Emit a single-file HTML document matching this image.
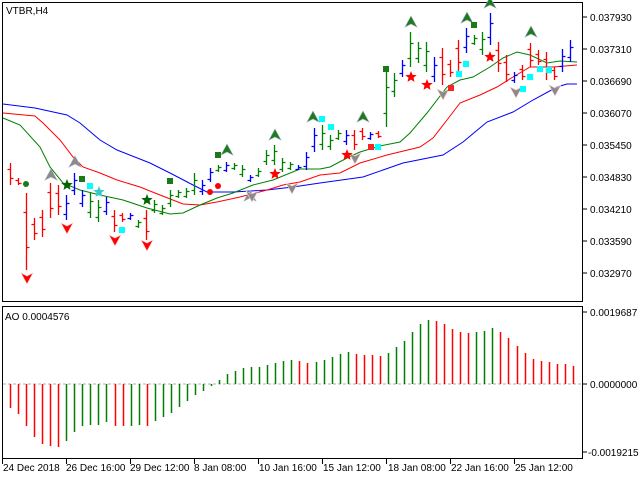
<!DOCTYPE html>
<html><head><meta charset="utf-8">
<style>
html,body{margin:0;padding:0;background:#fff;}
svg{display:block;font-family:"Liberation Sans",sans-serif;font-size:10px;}
</style></head>
<body>
<svg id="s" width="640" height="480" viewBox="0 0 640 480" xmlns="http://www.w3.org/2000/svg">
<rect width="640" height="480" fill="#fff"/>
<!-- frames -->
<rect x="2.5" y="2.5" width="580" height="299" fill="none" stroke="#000"/>
<rect x="2.5" y="306.5" width="580" height="152" fill="none" stroke="#000"/>
<g stroke="#000">
<line x1="583" y1="17" x2="587" y2="17"/><line x1="583" y1="49" x2="587" y2="49"/><line x1="583" y1="81" x2="587" y2="81"/><line x1="583" y1="113" x2="587" y2="113"/><line x1="583" y1="145" x2="587" y2="145"/><line x1="583" y1="177" x2="587" y2="177"/><line x1="583" y1="209" x2="587" y2="209"/><line x1="583" y1="241" x2="587" y2="241"/><line x1="583" y1="273" x2="587" y2="273"/>
<line x1="583" y1="312" x2="587" y2="312"/><line x1="583" y1="384" x2="587" y2="384"/><line x1="583" y1="452" x2="587" y2="452"/>
<line x1="2.5" y1="459" x2="2.5" y2="464"/><line x1="66.5" y1="459" x2="66.5" y2="464"/><line x1="130.5" y1="459" x2="130.5" y2="464"/><line x1="194.5" y1="459" x2="194.5" y2="464"/><line x1="258.5" y1="459" x2="258.5" y2="464"/><line x1="322.5" y1="459" x2="322.5" y2="464"/><line x1="386.5" y1="459" x2="386.5" y2="464"/><line x1="450.5" y1="459" x2="450.5" y2="464"/><line x1="514.5" y1="459" x2="514.5" y2="464"/>
</g>
<g fill="#000">
<text x="590" y="21">0.037930</text><text x="590" y="53">0.037310</text><text x="590" y="85">0.036690</text><text x="590" y="117">0.036070</text><text x="590" y="149">0.035450</text><text x="590" y="181">0.034830</text><text x="590" y="213">0.034210</text><text x="590" y="245">0.033590</text><text x="590" y="277">0.032970</text>
<text x="590" y="316">0.0019687</text><text x="590" y="388">0.0000000</text><text x="588" y="456">-0.0019215</text>
<text x="3" y="471">24 Dec 2018</text><text x="66" y="471">26 Dec 16:00</text><text x="130" y="471">29 Dec 12:00</text><text x="194" y="471">8 Jan 08:00</text><text x="259" y="471">10 Jan 16:00</text><text x="323" y="471">15 Jan 12:00</text><text x="388" y="471">18 Jan 08:00</text><text x="451" y="471">22 Jan 16:00</text><text x="515" y="471">25 Jan 12:00</text>
<text x="6" y="14">VTBR,H4</text>
<text x="5" y="320">AO 0.0004576</text>
</g>
<line x1="3" y1="384" x2="582" y2="384" stroke="#b0b0b0" stroke-dasharray="3,2"/>
<!-- MAs -->
<polyline fill="none" stroke="#0000ff" points="3,104 35,108 67,115 80,123 100,140 117,150 150,163 170,173 193,185 207,192 233,192 267,190 293,187 320,183 363,177 403,163 443,155 463,142 487,122 513,112 533,100 557,87 567,84 577,84"/>
<polyline fill="none" stroke="#ff0000" points="3,113 35,116 43,123 60,140 73,157 83,167 100,173 117,180 140,187 160,195 183,204 200,205 217,202 240,197 267,190 283,185 300,182 320,175 340,173 360,163 387,155 420,147 433,138 447,120 460,103 480,95 497,87 513,77 530,67 553,67 577,65"/>
<polyline fill="none" stroke="#008000" points="3,118 20,125 40,147 50,167 63,183 80,190 100,195 123,200 147,208 170,214 183,213 200,205 217,198 233,193 253,185 273,180 300,169 320,169 330,167 347,158 360,152 380,146 400,142 410,133 427,113 447,87 460,80 473,77 490,67 503,58 517,52 530,55 547,63 560,61 577,62"/>
<g id="bars"></g>
<g id="ao"></g>
<g id="mk"></g>
</svg>
<script>
var NS="http://www.w3.org/2000/svg";
function add(g,tag,a){var e=document.createElementNS(NS,tag);for(var k in a)e.setAttribute(k,a[k]);document.getElementById(g).appendChild(e);}
var red=[[10,163,185],[18,178,185],[26,193,270],[34,218,240],[42,210,237],[50,183,218],[58,185,215],[114,210,232],[122,213,222],[146,210,240],[354,130,150],[362,128,140],[378,131,138],[442,48,85],[450,60,77],[458,40,72],[498,42,72],[506,55,82],[522,65,80],[530,43,67],[538,50,65],[546,52,80],[554,67,80]];
var blue=[[66,195,220],[74,173,195],[82,190,207],[106,197,215],[130,213,220],[202,180,195],[210,168,182],[226,162,172],[250,175,182],[298,165,170],[306,152,170],[314,128,152],[346,130,145],[370,132,140],[402,60,77],[434,57,82],[466,28,53],[490,13,45],[514,72,83],[562,49,72],[570,40,62]];
var green=[[90,193,218],[98,200,222],[138,220,228],[154,200,213],[162,205,215],[170,190,207],[178,190,198],[186,188,198],[194,173,195],[218,165,172],[234,163,170],[242,165,177],[258,168,177],[266,150,165],[274,145,165],[282,158,172],[290,162,170],[322,125,150],[330,135,150],[338,130,140],[386,70,127],[394,73,97],[410,32,67],[418,42,63],[426,42,72],[474,35,45],[482,32,55]];
function bars(list,col,up){var d="";list.forEach(function(b){var x=b[0]+0.5,h=b[1],l=b[2];var o=up?Math.round(l-(l-h)*0.25):Math.round(h+(l-h)*0.25);var c=up?Math.round(h+(l-h)*0.3):Math.round(l-(l-h)*0.3);d+="M"+x+" "+h+"V"+l+"M"+(x-3)+" "+(o+.5)+"H"+x+"M"+x+" "+(c+.5)+"H"+(x+3);});add("bars","path",{d:d,stroke:col,fill:"none","stroke-width":"1.3"});}
bars(red,"#ff0000",false);bars(blue,"#0000ff",true);bars(green,"#008000",true);
var v=[408,414,426,437,444,446,447,441,432,426,425,425,422,426,426,426,425,426,421,417,413,407,401,395,391,386,380,374,371,368,367,367,365,363,361,360,361,363,362,360,357,354,352,354,355,355,356,353,347,341,332,324,320,321,324,329,332,333,332,331,328,332,338,346,353,359,361,362,364,364,366];
var rs=[0,1,2,3,4,5,6,13,14,17,36,37,43,44,45,46,53,54,55,56,57,61,62,63,64,65,66,67,68,69,70];
var dr="",dg="";v.forEach(function(y,i){var x=Math.round(10+8.04*i)+0.5;var s="M"+x+" 384V"+y;if(rs.indexOf(i)>=0)dr+=s;else dg+=s;});
add("ao","path",{d:dr,stroke:"#ff0000","stroke-width":"1.5",fill:"none"});add("ao","path",{d:dg,stroke:"#008000","stroke-width":"1.5",fill:"none"});
function upA(x,y,c){add("mk","path",{d:"M"+x+" "+(y-6)+"L"+(x+6)+" "+(y+5)+"L"+x+" "+(y+2)+"L"+(x-6)+" "+(y+5)+"Z",fill:c,stroke:"#9ab",  "stroke-width":"0.6"});}
function dnA(x,y,c){add("mk","path",{d:"M"+x+" "+(y+6)+"L"+(x+6)+" "+(y-5)+"L"+x+" "+(y-2)+"L"+(x-6)+" "+(y-5)+"Z",fill:c,stroke:"#fcc","stroke-width":"0.6"});}
function star(x,y,c){var p=[];for(var k=0;k<10;k++){var r=k%2?2.6:6,a=Math.PI/5*k-Math.PI/2;p.push((x+r*Math.cos(a)).toFixed(1)+","+(y+r*Math.sin(a)).toFixed(1));}add("mk","polygon",{points:p.join(" "),fill:c});}
function sq(x,y,c){add("mk","rect",{x:x-3,y:y-3,width:6,height:6,fill:c});}
function dot(x,y,c){add("mk","circle",{cx:x,cy:y,r:3,fill:c});}
[[51,175],[75,162],[250,196]].forEach(function(p){upA(p[0],p[1],"#8a8a8a");});
[[227,150],[275,135],[313,117],[363,117],[411,22],[467,18],[490,3],[531,32]].forEach(function(p){upA(p[0],p[1],"#1f7a1f");});
[[27,278],[67,228],[115,240],[147,245]].forEach(function(p){dnA(p[0],p[1],"#ff0000");});
[[252,196],[292,188],[355,158],[443,94],[516,92],[555,90]].forEach(function(p){dnA(p[0],p[1],"#8a8a8a");});
[[67,185],[147,200]].forEach(function(p){star(p[0],p[1],"#006400");});star(99,192,"#33cccc");
[[275,174],[347,155],[411,77],[427,85],[490,57]].forEach(function(p){star(p[0],p[1],"#ff0000");});
[[90,186],[122,230],[322,119],[331,127],[378,147],[459,74],[466,64],[523,89],[530,77],[540,69],[549,70]].forEach(function(p){sq(p[0],p[1],"#00ffff");});
[[82,179],[170,181],[218,155],[386,69],[474,25]].forEach(function(p){sq(p[0],p[1],"#1a7a1a");});
[[371,147],[451,88]].forEach(function(p){sq(p[0],p[1],"#ff2020");});
dot(210,192,"#ff0000");dot(218,186,"#ff0000");dot(26,184,"#1a7a1a");
</script>
</body></html>
